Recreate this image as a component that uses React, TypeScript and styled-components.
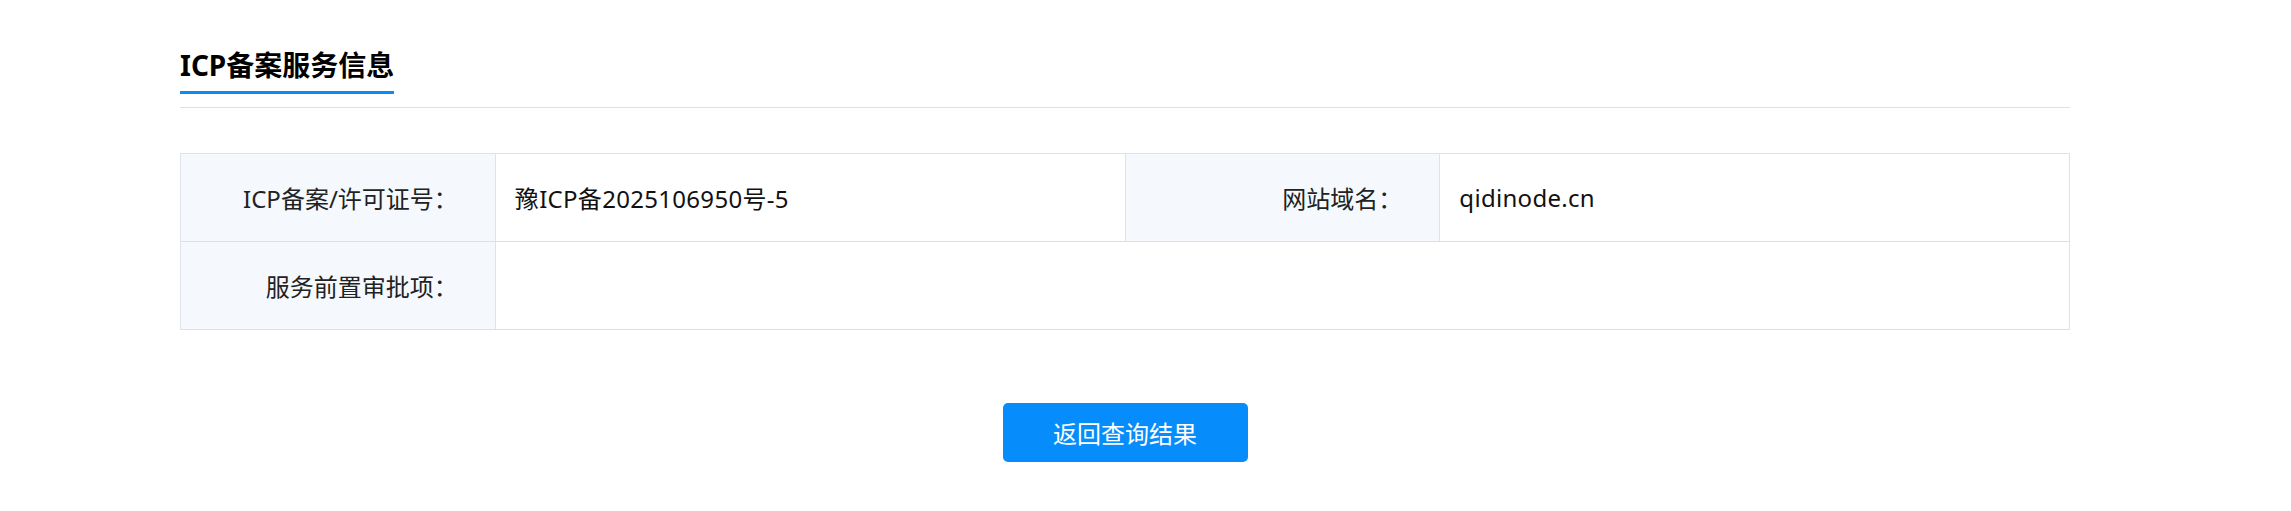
import styled, { createGlobalStyle } from "styled-components";

const GlobalStyle = createGlobalStyle`
  html, body {
    margin: 0;
    padding: 0;
    background: #ffffff;
    font-family: "Noto Sans", "Noto Sans CJK SC", sans-serif;
    color: #222;
  }
`;

const Page = styled.div`
  width: 1890px;
  margin-left: 180px;
  padding-top: 45px;
`;

const Header = styled.div`
  border-bottom: 1px solid #d3e5f5;
  padding-bottom: 13px;
  margin-bottom: 45px;
`;

const Title = styled.h2`
  display: inline-block;
  margin: 0;
  font-size: 28px;
  line-height: 40px;
  font-weight: 700;
  color: #000;
  padding-bottom: 6px;
  border-bottom: 3px solid #0b8cf5;
`;

const Table = styled.div`
  display: grid;
  grid-template-columns: 1fr 2fr 1fr 2fr;
  border-top: 1px solid #dfe3e8;
  border-left: 1px solid #dfe3e8;
`;

type CellProps = { $span?: number };

const Cell = styled.div<CellProps>`
  height: 88px;
  display: flex;
  align-items: center;
  font-size: 24px;
  border-right: 1px solid #dfe3e8;
  border-bottom: 1px solid #d8e1ea;
  grid-column: span ${props => props.$span ?? 1};
  box-sizing: border-box;
`;

const Label = styled(Cell)`
  justify-content: flex-end;
  padding-right: 37px;
  background: #f5f9fe;
  color: #222;
`;

const Value = styled(Cell)`
  padding-left: 19px;
  color: #111;
  letter-spacing: 0.3px;
`;

const Footer = styled.div`
  display: flex;
  justify-content: center;
  padding-top: 73px;
`;

const Button = styled.button`
  width: 245px;
  height: 59px;
  border: none;
  border-radius: 5px;
  background: #078cfb;
  color: #fff;
  font-family: inherit;
  font-size: 24px;
  cursor: pointer;
`;

export default function App() {
  return (
    <>
      <GlobalStyle />
      <Page>
        <Header>
          <Title>ICP备案服务信息</Title>
        </Header>
        <Table>
          <Label>ICP备案/许可证号：</Label>
          <Value>豫ICP备2025106950号-5</Value>
          <Label>网站域名：</Label>
          <Value>qidinode.cn</Value>
          <Label>服务前置审批项：</Label>
          <Value $span={3}></Value>
        </Table>
        <Footer>
          <Button>返回查询结果</Button>
        </Footer>
      </Page>
    </>
  );
}
